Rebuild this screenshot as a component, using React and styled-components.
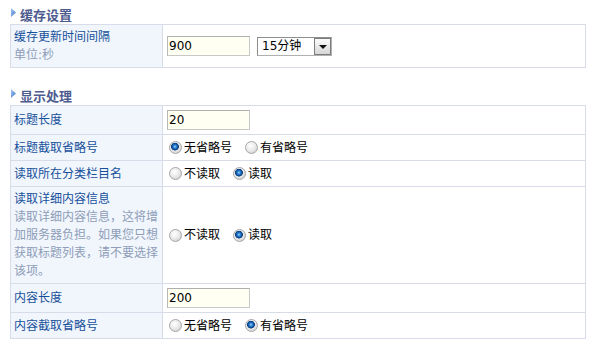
import React from "react";
import styled, { createGlobalStyle } from "styled-components";

const GlobalStyle = createGlobalStyle`
  body {
    margin: 0;
    background: #fff;
    font-family: "DejaVu Sans", "Noto Sans CJK SC", sans-serif;
    font-size: 12px;
  }
`;

function Arrow() {
  return (
    <svg width="5" height="9" viewBox="0 0 5 9">
      <defs>
        <linearGradient id="arr" x1="0" y1="0" x2="1" y2="1">
          <stop offset="0" stopColor="#a9c8f2" />
          <stop offset="1" stopColor="#3f74c8" />
        </linearGradient>
      </defs>
      <polygon points="0,0 5,4.5 0,9" fill="url(#arr)" />
    </svg>
  );
}

export default function App() {
  return (
    <Page>
      <GlobalStyle />
      <Section>
        <Title>
          <Arrow />
          缓存设置
        </Title>
        <Table>
          <colgroup>
            <LabelCol />
            <col />
          </colgroup>
          <tbody>
            <tr>
              <Label>
                缓存更新时间间隔
                <Hint>单位:秒</Hint>
              </Label>
              <Value>
                <Controls>
                  <TextInput defaultValue="900" />
                  <Select>
                    <SelectText>15分钟</SelectText>
                    <SelectButton>
                      <Caret />
                    </SelectButton>
                  </Select>
                </Controls>
              </Value>
            </tr>
          </tbody>
        </Table>
      </Section>

      <Section>
        <Title>
          <Arrow />
          显示处理
        </Title>
        <Table>
          <colgroup>
            <LabelCol />
            <col />
          </colgroup>
          <tbody>
            <tr>
              <Label>标题长度</Label>
              <Value>
                <TextInput defaultValue="20" />
              </Value>
            </tr>
            <tr>
              <Label>标题截取省略号</Label>
              <Value>
                <Options>
                  <Option><Radio name="t1" defaultChecked />无省略号</Option>
                  <Option><Radio name="t1" />有省略号</Option>
                </Options>
              </Value>
            </tr>
            <tr>
              <Label>读取所在分类栏目名</Label>
              <Value>
                <Options>
                  <Option><Radio name="t2" />不读取</Option>
                  <Option><Radio name="t2" defaultChecked />读取</Option>
                </Options>
              </Value>
            </tr>
            <tr>
              <Label>
                读取详细内容信息
                <Hint>读取详细内容信息，这将增加服务器负担。如果您只想获取标题列表，请不要选择该项。</Hint>
              </Label>
              <Value>
                <Options>
                  <Option><Radio name="t3" />不读取</Option>
                  <Option><Radio name="t3" defaultChecked />读取</Option>
                </Options>
              </Value>
            </tr>
            <tr>
              <Label>内容长度</Label>
              <Value>
                <TextInput defaultValue="200" />
              </Value>
            </tr>
            <tr>
              <Label>内容截取省略号</Label>
              <Value>
                <Options>
                  <Option><Radio name="t4" />无省略号</Option>
                  <Option><Radio name="t4" defaultChecked />有省略号</Option>
                </Options>
              </Value>
            </tr>
          </tbody>
        </Table>
      </Section>
    </Page>
  );
}

const Page = styled.div`
  padding: 4px 0 0 10px;
  width: 576px;
`;

const Section = styled.section`
  & + & {
    margin-top: 17px;
  }
`;

const Title = styled.h3`
  margin: 0;
  height: 20px;
  display: flex;
  align-items: center;
  gap: 4px;
  padding-left: 1px;
  font-size: 13px;
  font-weight: bold;
  color: #4e5b8f;

  svg {
    margin-top: -3px;
  }
`;

const Table = styled.table`
  width: 576px;
  border-collapse: collapse;
  table-layout: fixed;
`;

const LabelCol = styled.col`
  width: 152px;
`;

const Label = styled.td`
  padding: 3px 3px 3px 3px;
  background: #f1f6fd;
  border: 1px solid #d7dce8;
  color: #16509a;
  line-height: 18px;
  vertical-align: middle;
`;

const Hint = styled.span`
  display: block;
  color: #8e9db8;
`;

const Value = styled.td`
  padding: 3px 4px;
  border: 1px solid #d7dce8;
  vertical-align: middle;
  line-height: 18px;
`;

const Controls = styled.div`
  display: flex;
  align-items: center;
  gap: 7px;
`;

const TextInput = styled.input.attrs({ type: "text" })`
  display: block;
  box-sizing: border-box;
  width: 83px;
  height: 20px;
  margin: 1px 0;
  padding: 0 1px;
  border: 1px solid #c8c8c8;
  border-top-color: #aeaeae;
  border-left-color: #b8b8b8;
  background: #fffff2;
  font: 12px "DejaVu Sans", sans-serif;
  color: #000;
  outline: none;
`;

const Select = styled.div`
  display: flex;
  box-sizing: border-box;
  width: 75px;
  height: 19px;
  border: 1px solid #8e8e8e;
  border-right-color: #b0b0b0;
  border-bottom-color: #b0b0b0;
  background: #fff;
`;

const SelectText = styled.span`
  flex: 1;
  padding-left: 4px;
  line-height: 17px;
  color: #000;
`;

const SelectButton = styled.span`
  box-sizing: border-box;
  width: 17px;
  display: flex;
  align-items: center;
  justify-content: center;
  border: 1px solid #7c7c7c;
  background: linear-gradient(#fbfbfb, #d6d6d6);
`;

const Caret = styled.span`
  width: 0;
  height: 0;
  margin-top: 2px;
  border-top: 4px solid #111;
  border-left: 4px solid transparent;
  border-right: 4px solid transparent;
`;

const Options = styled.div`
  display: flex;
  align-items: center;
  height: 19px;
`;

const Option = styled.label`
  display: flex;
  align-items: center;
  margin-right: 11px;
  color: #000;
`;

const Radio = styled.input.attrs({ type: "radio" })`
  appearance: none;
  box-sizing: border-box;
  width: 13px;
  height: 13px;
  margin: 0 2px 0 2px;
  border-radius: 50%;
  border: 1px solid #a7a7a7;
  background: radial-gradient(circle at 40% 35%, #ffffff 0%, #ececec 45%, #c6c6c6 100%);

  &:checked {
    background:
      radial-gradient(circle at 45% 42%, #9ad4ff 0, #2f86d6 1.5px, #0c4b93 3px, #0c3f80 3.6px, transparent 4.2px),
      radial-gradient(circle at 40% 35%, #ffffff 0%, #ececec 45%, #c6c6c6 100%);
  }
`;
